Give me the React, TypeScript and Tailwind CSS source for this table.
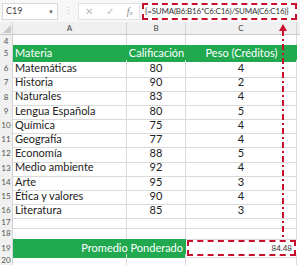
import React from "react";

const rows = [
  { n: 6, m: "Matemáticas", c: 80, p: 4 },
  { n: 7, m: "Historia", c: 90, p: 2 },
  { n: 8, m: "Naturales", c: 83, p: 4 },
  { n: 9, m: "Lengua Española", c: 80, p: 5 },
  { n: 10, m: "Química", c: 75, p: 4 },
  { n: 11, m: "Geografía", c: 77, p: 4 },
  { n: 12, m: "Economía", c: 88, p: 5 },
  { n: 13, m: "Medio ambiente", c: 92, p: 4 },
  { n: 14, m: "Arte", c: 95, p: 3 },
  { n: 15, m: "Ética y valores", c: 90, p: 4 },
  { n: 16, m: "Literatura", c: 85, p: 3 },
];

const cols = "grid grid-cols-[13px_114px_59px_111px_3px]";

function RowNum({ n }: { n: number | string }) {
  return (
    <div className="bg-[#f0f0f0] border-r border-b border-[#d4d4d4] text-[8px] text-[#555] flex items-center justify-center">
      {n}
    </div>
  );
}

function Cell({ children, className = "" }: { children?: React.ReactNode; className?: string }) {
  return <div className={"border-r border-b border-[#dadada] flex items-center " + className}>{children}</div>;
}

export default function App() {
  return (
    <div className="relative w-[300px] h-[265px] overflow-hidden bg-white font-['Lato',sans-serif]">
      {/* formula bar */}
      <div className="h-[22px] flex items-center bg-[#f7f7f7] pl-[2px] pr-[3px] gap-[2px]">
        <div className="w-[56px] h-[17px] bg-white border border-[#d8d8d8] flex items-center justify-between px-[3px]">
          <span className="text-[9px] text-[#444]">C19</span>
          <span className="text-[6px] text-[#666]">▼</span>
        </div>
        <div className="w-[16px] flex justify-center text-[9px] text-[#bbb]">⋮</div>
        <div className="w-[62px] h-[17px] bg-white border border-[#e2e2e2] flex items-center justify-around text-[10px] text-[#bbb]">
          <span>✕</span>
          <span>✓</span>
          <span className="italic font-['Liberation_Serif',serif] text-[#888]">
            f<span className="text-[7px]">x</span>
          </span>
        </div>
        <div className="flex-1 h-[17px] bg-white border-2 border-dashed border-[#c8102e] flex items-center px-[1px] text-[8px] tracking-[-0.2px] text-[#333] whitespace-nowrap overflow-hidden">
          {"{=SUMA(B6:B16*C6:C16)/SUMA(C6:C16)}"}
        </div>
      </div>

      {/* column headers */}
      <div className={cols + " h-[13px] bg-[#f0f0f0] border-b border-[#c8c8c8] text-[8px] text-[#444]"}>
        <div className="border-r border-[#d4d4d4] relative">
          <div className="absolute right-[1px] bottom-[1px] w-0 h-0 border-l-[8px] border-l-transparent border-b-[8px] border-b-[#c8c8c8]" />
        </div>
        <div className="border-r border-[#d4d4d4] flex items-center justify-center">A</div>
        <div className="border-r border-[#d4d4d4] flex items-center justify-center">B</div>
        <div className="border-r border-[#d4d4d4] flex items-center justify-center">C</div>
        <div />
      </div>

      {/* row 4 */}
      <div className={cols + " h-[10px]"}>
        <RowNum n={4} />
        <Cell />
        <Cell />
        <Cell />
        <div />
      </div>

      {/* row 5 header */}
      <div className={cols + " h-[15px]"}>
        <RowNum n={5} />
        <div className="bg-[#21a94f] flex items-center pl-[2px] text-[11px] text-white">Materia</div>
        <div className="bg-[#21a94f] flex items-center justify-center text-[11px] text-white whitespace-nowrap">
          Calificación
        </div>
        <div className="bg-[#21a94f] flex items-center justify-center text-[11px] text-white whitespace-nowrap">
          Peso (Créditos)
        </div>
        <div />
      </div>

      {rows.map((r) => (
        <div key={r.n} className={cols + " h-[14.2px]"}>
          <RowNum n={r.n} />
          <Cell className="pl-[2px] text-[11px] text-[#222] whitespace-nowrap">{r.m}</Cell>
          <Cell className="justify-center text-[11px] text-[#222]">{r.c}</Cell>
          <Cell className="justify-center text-[11px] text-[#222]">{r.p}</Cell>
          <div />
        </div>
      ))}

      <div className={cols + " h-[11px]"}>
        <RowNum n={17} />
        <Cell />
        <Cell />
        <Cell />
        <div />
      </div>
      <div className={cols + " h-[12px]"}>
        <RowNum n={18} />
        <Cell />
        <Cell />
        <Cell />
        <div />
      </div>

      {/* row 19 */}
      <div className={cols + " h-[15px]"}>
        <RowNum n={19} />
        <div className="col-span-2 bg-[#21a94f] flex items-center justify-end pr-[3px] text-[11px] text-white">
          Promedio Ponderado
        </div>
        <div className="p-[1px] border-b border-[#dadada]">
          <div className="h-full border-2 border-dashed border-[#c8102e] flex items-center justify-end pr-[2px] text-[8px] text-[#333]">
            84.48
          </div>
        </div>
        <div />
      </div>
      <div className={cols + " h-[12px]"}>
        <RowNum n={20} />
        <Cell />
        <Cell />
        <Cell />
        <div />
      </div>

      {/* arrow from result to formula */}
      <svg className="absolute left-[278px] top-[24px]" width="10" height="215" viewBox="0 0 10 215">
        <line x1="5" y1="6" x2="5" y2="214" stroke="#c8102e" strokeWidth="2" strokeDasharray="6 3 2 3" />
        <polygon points="5,0 1,7 9,7" fill="#c8102e" />
      </svg>
    </div>
  );
}
